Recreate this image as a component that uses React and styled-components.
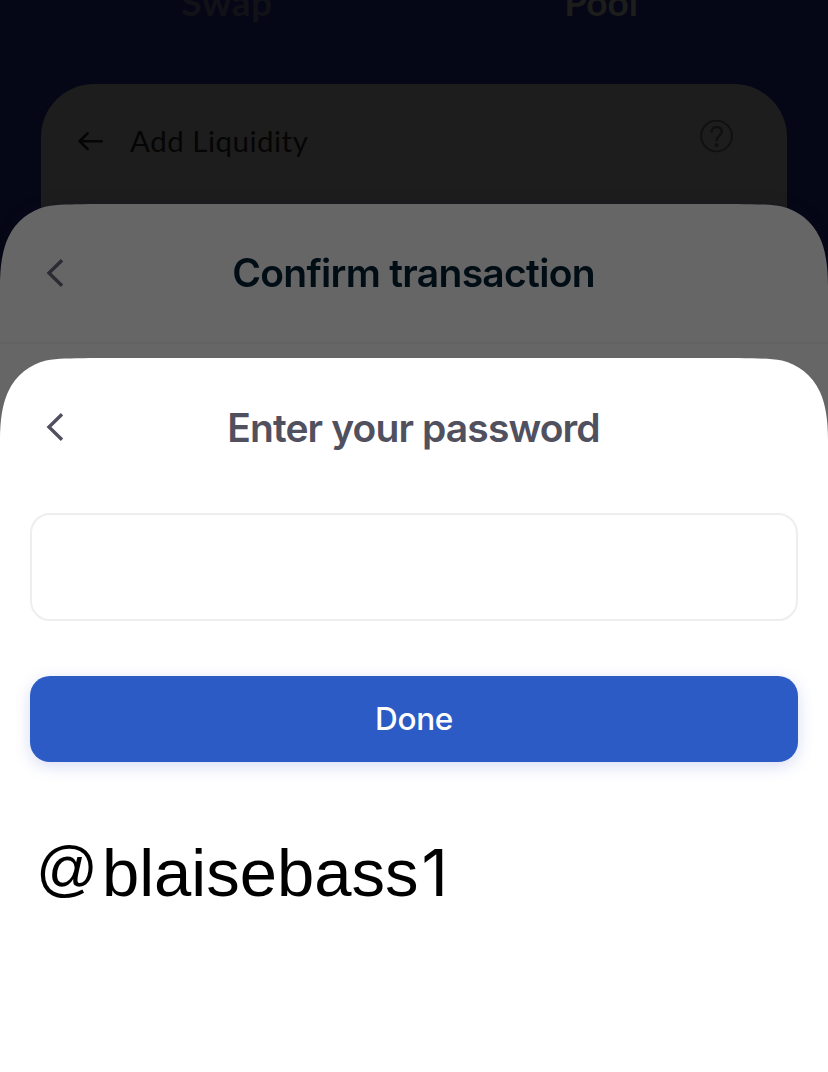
import React, { useState } from "react"
import styled, { createGlobalStyle } from "styled-components"

const sheetShape =
  "M0 82 C0 62 2.5 46 8 34 C16 17 30 6.5 46 2.6 C58 0.2 70 0.5 90 0 H738 C758 0.5 770 0.2 782 2.6 C798 6.5 812 17 820 34 C825.5 46 828 62 828 82 V1072 H0 Z"

const BackIcon = () => (
  <svg width="18" height="28" viewBox="0 0 18 28" fill="none">
    <path d="M16 1.2 L3 14 L16 26.8" stroke="currentColor" strokeWidth="3.4" />
  </svg>
)

const ArrowIcon = () => (
  <svg width="26" height="20" viewBox="0 0 26 20" fill="none">
    <path
      d="M10.6 2.4 L2.6 10.2 L10.6 18 M2.6 10.2 H24.6"
      stroke="currentColor"
      strokeWidth="2.6"
      strokeLinecap="round"
      strokeLinejoin="round"
    />
  </svg>
)

const HelpIcon = () => (
  <svg width="34" height="34" viewBox="0 0 34 34" fill="none">
    <circle cx="16.5" cy="16" r="15.4" stroke="currentColor" strokeWidth="1.8" />
    <path
      d="M11.6 11.6 C11.6 5.4 21.8 5.4 21.8 11.6 C21.8 15.6 16.6 16.2 16.6 20.4"
      stroke="currentColor"
      strokeWidth="2.4"
      strokeLinecap="round"
    />
    <circle cx="16.6" cy="25.2" r="1.9" fill="currentColor" />
  </svg>
)

const App = () => {
  const [password, setPassword] = useState("")

  return (
    <>
      <GlobalStyle />
      <Page>
        <Tabs>
          <Tab>Swap</Tab>
          <Tab $active>Pool</Tab>
        </Tabs>
        <LiquidityCard>
          <ArrowIcon />
          <h2>Add Liquidity</h2>
          <HelpButton>
            <HelpIcon />
          </HelpButton>
        </LiquidityCard>
        <SheetShadow>
          <ConfirmSheet>
            <SheetHeader $divided>
              <BackIcon />
              <SheetTitle $spacing="-0.7px">Confirm transaction</SheetTitle>
            </SheetHeader>
          </ConfirmSheet>
        </SheetShadow>
        <PasswordSheet>
          <SheetHeader>
            <BackIcon />
            <SheetTitle $spacing="-0.87px">Enter your password</SheetTitle>
          </SheetHeader>
          <Form onSubmit={e => e.preventDefault()}>
            <PasswordInput
              type="password"
              value={password}
              onChange={e => setPassword(e.target.value)}
            />
            <DoneButton>Done</DoneButton>
          </Form>
          <Handle>
            <At>@</At>blaisebass<Digit>1</Digit>
          </Handle>
        </PasswordSheet>
      </Page>
    </>
  )
}

const GlobalStyle = createGlobalStyle`
  * {
    box-sizing: border-box;
  }

  body {
    margin: 0;
    overflow: hidden;
  }

  h1,
  h2,
  p {
    margin: 0;
  }
`

const Page = styled.div`
  display: flex;
  flex-direction: column;
  width: 828px;
  height: 1072px;
  overflow: hidden;
  background-color: #050716;
  font-family: Inter, "Liberation Sans", sans-serif;
`

const Tabs = styled.div`
  display: grid;
  grid-template-columns: 374px 374px;
  justify-content: center;
  flex: none;
  height: 84px;
`

const Tab = styled.div`
  margin-top: -20px;
  text-align: center;
  font-family: Lato, sans-serif;
  font-size: 37px;
  line-height: 44px;
  font-weight: 700;
  letter-spacing: ${props => (props.$active ? "0" : "0.6px")};
  color: ${props => (props.$active ? "#1d1d1b" : "#111217")};
`

const LiquidityCard = styled.div`
  display: flex;
  align-items: flex-start;
  flex: none;
  height: 220px;
  margin: 0 41px;
  padding: 47px 53px 0 36px;
  border-radius: 53px 53px 0 0;
  background-color: #1d1d1d;
  color: #050505;

  h2 {
    margin: -8px 0 0 27px;
    font-family: Lato, sans-serif;
    font-size: 29.5px;
    line-height: 36px;
    font-weight: 400;
    letter-spacing: 0.5px;
  }
`

const HelpButton = styled.div`
  margin: -11px 0 0 auto;
  color: #101010;
`

const SheetShadow = styled.div`
  flex: none;
  margin-top: -100px;
  filter: drop-shadow(0 -4px 6px rgba(16, 16, 40, 0.12));
`

const ConfirmSheet = styled.div`
  height: 260px;
  background-color: #666666;
  color: #2b2b33;
  clip-path: path("${sheetShape}");

  h1 {
    color: #010d15;
  }
`

const PasswordSheet = styled.div`
  flex: none;
  height: 714px;
  margin-top: -106px;
  background-color: #ffffff;
  color: #50505f;
  clip-path: path("${sheetShape}");

  h1 {
    padding-top: 2px;
  }
`

const SheetHeader = styled.div`
  display: grid;
  grid-template-columns: 18px 1fr 18px;
  align-items: center;
  height: 140px;
  padding: 0 46px;
  border-bottom: 2px solid ${props => (props.$divided ? "#626262" : "transparent")};
`

const SheetTitle = styled.h1`
  padding-right: 1px;
  text-align: center;
  font-size: 39px;
  line-height: 48px;
  font-weight: 600;
  letter-spacing: ${props => props.$spacing};
`

const Form = styled.form`
  display: flex;
  flex-direction: column;
  gap: 55px;
  padding: 15px 30px 0;
`

const PasswordInput = styled.input`
  height: 108px;
  padding: 0 30px;
  border: 2px solid #eeeeee;
  border-radius: 20px;
  outline: none;
  background-color: #ffffff;
  font-size: 32px;
`

const DoneButton = styled.button`
  height: 86px;
  padding: 0 0 2px;
  border: none;
  border-radius: 20px;
  background-color: #2c5bc5;
  box-shadow: 0 4px 16px rgba(60, 80, 200, 0.2);
  color: #ffffff;
  font-family: Inter, sans-serif;
  font-size: 31.5px;
  font-weight: 500;
  letter-spacing: -0.3px;
`

const Handle = styled.p`
  display: flex;
  align-items: baseline;
  margin: 73px 0 0 36px;
  font-family: "Liberation Sans", Arial, sans-serif;
  font-size: 67px;
  line-height: 76px;
  color: #000000;
`

const At = styled.span`
  margin-right: 4px;
  font-size: 61px;
  line-height: 60px;
  transform: translateY(-7px);
`

const Digit = styled.span`
  margin-left: 3px;
  font-family: Inter, sans-serif;
  font-size: 65px;
  line-height: 76px;
`

export default App
